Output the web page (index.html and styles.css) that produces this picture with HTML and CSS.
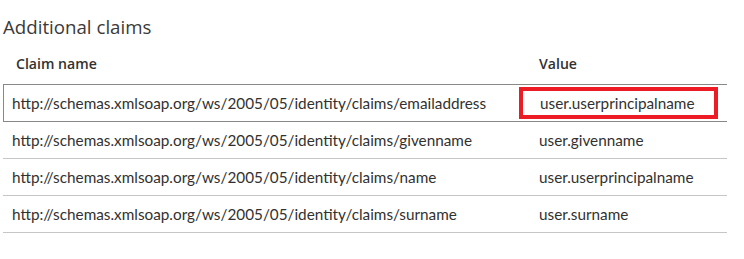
FILE: index.html
```html
<!DOCTYPE html>
<html lang="en">
<head>
<meta charset="utf-8">
<title>Additional claims</title>
<link rel="stylesheet" href="styles.css">
</head>
<body>
<section class="claims">
  <h2 class="title">Additional claims</h2>
  <div class="table">
    <div class="row head">
      <div class="cell name">Claim name</div>
      <div class="cell value">Value</div>
    </div>
    <div class="row selected">
      <div class="cell name">http://schemas.xmlsoap.org/ws/2005/05/identity/claims/emailaddress</div>
      <div class="cell value"><span class="highlight"></span>user.userprincipalname</div>
    </div>
    <div class="row">
      <div class="cell name">http://schemas.xmlsoap.org/ws/2005/05/identity/claims/givenname</div>
      <div class="cell value">user.givenname</div>
    </div>
    <div class="row">
      <div class="cell name">http://schemas.xmlsoap.org/ws/2005/05/identity/claims/name</div>
      <div class="cell value">user.userprincipalname</div>
    </div>
    <div class="row">
      <div class="cell name">http://schemas.xmlsoap.org/ws/2005/05/identity/claims/surname</div>
      <div class="cell value">user.surname</div>
    </div>
  </div>
</section>
</body>
</html>
```
FILE: styles.css
```css
html, body {
  margin: 0;
  padding: 0;
  background: #ffffff;
}
body {
  font-family: "Lato", "Open Sans", sans-serif;
  color: #323130;
  width: 744px;
  height: 259px;
  overflow: hidden;
}
.claims {
  padding: 12px 17px 0 3px;
}
.title {
  margin: 0;
  font-family: "Open Sans", "Noto Sans", sans-serif;
  font-size: 18.7px;
  font-weight: 400;
  line-height: 30px;
  color: #3b3a39;
}
.table {
  display: flex;
  flex-direction: column;
  margin-top: 7px;
}
.row {
  display: grid;
  grid-template-columns: 524px 1fr;
  height: 37px;
  box-sizing: border-box;
  border-bottom: 1px solid #c8c6c4;
  align-items: center;
  font-size: 15.3px;
}
.row.head {
  height: 36px;
  padding-bottom: 7px;
  border-bottom: 1px solid #8a8886;
  font-family: "Open Sans", "Noto Sans", sans-serif;
  font-weight: 600;
  font-size: 14.1px;
}
.row.head .name {
  padding-left: 13px;
}
.row.selected {
  border-left: 1px solid #8a8886;
  border-bottom: 1px solid #8a8886;
}
.cell {
  white-space: nowrap;
}
.name {
  padding-left: 9px;
}
.row.selected .name {
  padding-left: 8px;
}
.value {
  position: relative;
  padding-left: 12px;
  height: 100%;
  display: flex;
  align-items: center;
}
.row.head .value {
  height: auto;
}
.highlight {
  position: absolute;
  left: -9px;
  right: 9px;
  top: 2px;
  bottom: 2px;
  border: 4px solid #ed1c24;
  box-sizing: border-box;
}
```
